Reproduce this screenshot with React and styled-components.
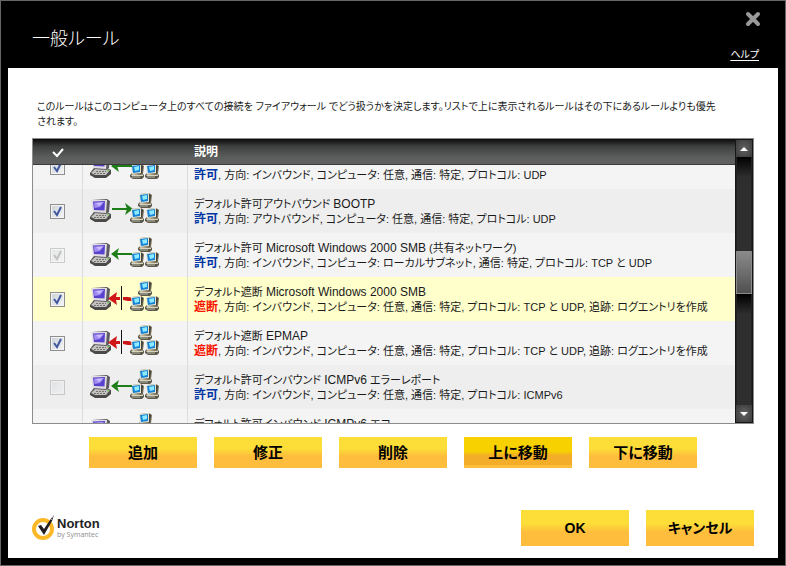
import React, { useLayoutEffect, useRef } from 'react';
import styled, { createGlobalStyle, css } from 'styled-components';

const GlobalStyle = createGlobalStyle`
  * {
    box-sizing: border-box;
  }
  body {
    margin: 0;
    background: #000;
    color: #1a1a1a;
    font-family: "Liberation Sans", "Noto Sans CJK JP", sans-serif;
    font-size: 12px;
    line-height: 15px;
    font-feature-settings: "palt";
  }
`;

const Dialog = styled.div`
  display: flex;
  flex-direction: column;
  height: 100vh;
  min-height: 400px;
  padding: 0 7px 7px;
  border: 1px solid #666;
  background: #000;
`;

const TitleBar = styled.header`
  display: flex;
  justify-content: space-between;
  height: 67px;
  padding: 7px 19px 6px 24px;
  color: #fff;
`;

const Title = styled.h1`
  margin: 0;
  padding-top: 17px;
  font-size: 18px;
  line-height: 24px;
  font-family: "Noto Sans CJK JP", sans-serif;
  font-weight: 300;
`;

const TitleActions = styled.div`
  display: flex;
  flex-direction: column;
  justify-content: space-between;
  align-items: flex-end;
`;

const CloseButton = styled.button`
  display: flex;
  padding: 3px 0 0;
  margin-right: -2px;
  border: none;
  background: none;
  cursor: pointer;
`;

const HelpLink = styled.a`
  color: #fff;
  font-size: 10px;
  line-height: 14px;
  text-underline-offset: 2px;
`;

const Content = styled.main`
  display: flex;
  flex: 1;
  flex-direction: column;
  min-height: 0;
  padding: 31px 24px 12px;
  background: #fff;
`;

const Intro = styled.p`
  margin: 0 0 9px;
  padding-left: 5px;
  font-size: 10px;
`;

const RuleList = styled.div`
  display: flex;
  flex: 1;
  min-height: 0;
  border: 1px solid #8c8c8c;
`;

const Viewport = styled.div`
  flex: 1;
  min-width: 0;
  overflow: hidden;
`;

const RuleTable = styled.table`
  width: 100%;
  table-layout: fixed;
  border-collapse: separate;
  border-spacing: 0;
`;

const HeadCell = styled.th`
  position: sticky;
  top: 0;
  z-index: 1;
  width: ${(props) => props.$width || 'auto'};
  height: 26px;
  padding: 2px 0 0 ${(props) => (props.$text ? '6px' : '0')};
  border-bottom: 1px solid #3c3a3c;
  background: linear-gradient(#0a0a0a, #3f4040 30%, #5d5f5f 75%, #5f6161);
  color: #fff;
  text-align: ${(props) => (props.$text ? 'left' : 'center')};
  font-weight: bold;

  svg {
    display: block;
    margin: 0 auto;
  }
`;

const Row = styled.tr`
  height: 44px;
  background: #f4f4f4;

  &:nth-child(even) {
    background: #eee;
  }

  ${(props) =>
    props.$selected &&
    css`
      &&& {
        background: #ffffcc;
      }
    `}
`;

const Cell = styled.td`
  height: 44px;
  padding: 0;
  border-right: 1px solid #dcdcdc;
  vertical-align: middle;
`;

const IconCell = styled(Cell)`
  padding-left: 7px;

  svg {
    display: block;
  }
`;

const TextCell = styled(Cell)`
  padding: 2px 0 0 6px;
  border-right: none;
  font-size: 11px;
  white-space: nowrap;
`;

const Line = styled.div`
  height: 15px;
`;

const Latin = styled.span`
  font-size: 12px;
`;

const Action = styled.b`
  color: ${(props) => (props.$block ? '#f81400' : '#0036a3')};
  font-size: 12px;
`;

const CheckLabel = styled.label`
  display: grid;
  width: 15px;
  margin: 0 auto;
  opacity: ${(props) => (props.$disabled ? 0.4 : 1)};

  > * {
    grid-area: 1 / 1;
  }

  svg {
    pointer-events: none;
  }
`;

const CheckInput = styled.input`
  appearance: none;
  width: 15px;
  height: 15px;
  margin: 0;
  border: 1px solid #8e8f8f;
  background: linear-gradient(135deg, #ccd0d6, #f4f5f6);
  box-shadow: inset 0 0 0 1px #f4f4f4;
`;

const ScrollBar = styled.div`
  display: flex;
  flex-direction: column;
  width: 18px;
  padding: 1px;
  background: #161616;
`;

const ScrollButton = styled.button`
  display: flex;
  align-items: center;
  justify-content: center;
  height: 17px;
  padding: 0;
  border: none;
  background: radial-gradient(#626262, #3a3a3a);
`;

const Track = styled.div`
  background: linear-gradient(#000, #2e2e2e 20px, #2e2e2e);
  box-shadow: inset 1px 0 #222, inset -1px 0 #222;
`;

const Thumb = styled.div`
  height: 43px;
  border: 1px solid #8a8a8a;
  background: linear-gradient(#8a8a8a, #505050);
`;

const Actions = styled.div`
  display: flex;
  justify-content: center;
  gap: 17px;
  margin: 13px 0 42px;
`;

const Footer = styled.footer`
  display: flex;
  gap: 17px;
`;

const Button = styled.button`
  width: 108px;
  height: ${(props) => (props.$large ? '36px' : '31px')};
  padding: 0;
  border: none;
  background: ${(props) =>
    props.$active
      ? 'linear-gradient(#f8d100 45%, #f3ad29 60%, #f3ad29 90%, #fdbd3c 90%)'
      : 'linear-gradient(#fddd38 38%, #febd3c 62%)'};
  color: #000;
  font: bold ${(props) => (props.$large ? '14px' : '15px')}/20px "Liberation Sans", "Noto Sans CJK JP", sans-serif;
  font-feature-settings: "palt";
  cursor: pointer;
`;

const Brand = styled.div`
  display: flex;
  align-items: center;
  gap: 3px;
  margin-right: auto;
`;

const BrandText = styled.div`
  display: flex;
  flex-direction: column;
`;

const BrandName = styled.strong`
  color: #222;
  font-size: 13px;
  line-height: 14px;
`;

const BrandOwner = styled.span`
  color: #8d8d8d;
  font-family: "Open Sans", sans-serif;
  font-size: 7px;
  line-height: 8px;
`;

const rules = [
  { checked: true, flow: 'in', name: '', app: '', detail: ['インバウンド', '任意', 'UDP'] },
  { checked: true, flow: 'out', name: 'デフォルト許可アウトバウンド', app: 'BOOTP', detail: ['アウトバウンド', '任意', 'UDP'] },
  { checked: true, disabled: true, flow: 'in', name: 'デフォルト許可', app: 'Microsoft Windows 2000 SMB', suffix: '(共有ネットワーク)', detail: ['インバウンド', 'ローカルサブネット', 'TCP と UDP'] },
  { checked: true, selected: true, block: true, name: 'デフォルト遮断', app: 'Microsoft Windows 2000 SMB', detail: ['インバウンド', '任意', 'TCP と UDP'] },
  { checked: true, block: true, name: 'デフォルト遮断', app: 'EPMAP', detail: ['インバウンド', '任意', 'TCP と UDP'] },
  { disabled: true, flow: 'in', name: 'デフォルト許可インバウンド', app: 'ICMPv6', suffix: 'エラーレポート', detail: ['インバウンド', '任意', 'ICMPv6'] },
  { checked: true, flow: 'in', name: 'デフォルト許可インバウンド', app: 'ICMPv6', suffix: 'エコー' },
];

function SmallPc({ x, y }) {
  return (
    <g transform={`translate(${x} ${y})`}>
      <path d="M0 11l2-2h10l2 2v2l-2 2H3l-3-2z" fill="#5c5a4c" />
      <path d="M1 11l2-1h9l1 1v1H2z" fill="#d8d4bd" />
      <path d="M2 1l9-1 3 2-1 8-2 1-9-1z" fill="#77705a" />
      <path d="M1 1l10-1v9l-9 1z" fill="#e9e5d2" />
      <path d="M2 2l8-1v7l-7 1z" fill="#1484d8" />
      <path d="M4 3l5-1v4L5 7z" fill="#8deaff" />
      <path d="M11 1l2 1-1 7-1 1z" fill="#45423a" />
      <path d="M2 13h8" stroke="#b9b6a6" />
    </g>
  );
}

function BigPc() {
  return (
    <g>
      <path d="M0 24l4-5h13l4 2v4l-5 4H5l-5-3z" fill="#4b4a48" />
      <path d="M1 24l4-4h11l4 1-4 5H5z" fill="#c4c2c0" />
      <path d="M4 24.500h11M6 22.500h10" stroke="#77736f" strokeDasharray="2 1" />
      <path d="M2 7l15-1 3 2-1 11-3 2-12-1z" fill="#5d5a60" />
      <path d="M1 7h16l-1 13-13-1z" fill="#e2dde0" />
      <path d="M3 8.500l12-.5-.5 9.500-10.500-.5z" fill="#5843cf" />
      <path d="M4 9.500l10-.5-4 5-5.500 1z" fill="#a48ef2" />
      <path d="M6 10l7-.5-4 3.500z" fill="#cdbdff" />
      <path d="M17 21.500h2" stroke="#62d342" />
    </g>
  );
}

function FlowIcon({ flow, block }) {
  return (
    <svg width="70" height="36" viewBox="0 0 70 36" aria-hidden="true">
      <BigPc />
      {!block && flow === 'out' && (
        <g fill="#1d7d18">
          <path d="M22 15h15v2H22z" />
          <path d="M35 10l8 6-8 6 2-6z" />
        </g>
      )}
      {block && <path d="M33 16h5l5 1v3h-5l-5-1z" fill="#c91515" />}
      <SmallPc x={48} y={0} />
      <SmallPc x={40} y={15} />
      <SmallPc x={55} y={15} />
      {!block && flow === 'in' && (
        <g fill="#1d7d18">
          <path d="M27 16h15v2H27z" />
          <path d="M29 11l-8 6 8 6-2-6z" />
        </g>
      )}
      {block && (
        <>
          <path d="M27 11l-9 6.500 9 6.500-1-5h4v-3h-4z" fill="#d01616" />
          <path d="M31 5h1v24h-1z" fill="#111" />
        </>
      )}
    </svg>
  );
}

function RuleRow({ rule }) {
  const [direction, computer, protocol] = rule.detail || [];
  return (
    <Row $selected={rule.selected}>
      <Cell>
        <CheckLabel $disabled={rule.disabled}>
          <CheckInput type="checkbox" defaultChecked={rule.checked} disabled={rule.disabled} />
          {rule.checked && (
            <svg width="15" height="15" viewBox="0 0 15 15">
              <path d="M4 7l3 4 4-8" fill="none" stroke={rule.disabled ? '#777' : '#4059a0'} strokeWidth="2" />
            </svg>
          )}
        </CheckLabel>
      </Cell>
      <IconCell>
        <FlowIcon flow={rule.flow} block={rule.block} />
      </IconCell>
      <TextCell>
        <Line>
          {rule.name} <Latin>{rule.app}</Latin> {rule.suffix}
        </Line>
        <Line>
          {rule.detail && (
            <>
              <Action $block={rule.block}>{rule.block ? '遮断' : '許可'}</Action>, 方向: {direction}, コンピュータ: {computer}, 通信: 特定, プロトコル:{' '}
              {protocol}
              {rule.block && ', 追跡: ログエントリを作成'}
            </>
          )}
        </Line>
      </TextCell>
    </Row>
  );
}

function NortonMark() {
  return (
    <svg width="22" height="28" viewBox="0 0 22 28" aria-hidden="true">
      <circle cx="11" cy="15" r="9" fill="none" stroke="#fdb827" strokeWidth="4" />
      <path d="M6 12l3-1 3 4 6-9 4-5-2 6-8 14z" fill="#231f20" />
      <path d="M18 4l2 2M20 2l1 2" stroke="#fff" strokeWidth="0.6" />
    </svg>
  );
}

function App() {
  const viewportRef = useRef(null);

  useLayoutEffect(() => {
    viewportRef.current.scrollTop = 20;
  }, []);

  return (
    <>
      <GlobalStyle />
      <Dialog>
        <TitleBar>
          <Title>一般ルール</Title>
          <TitleActions>
            <CloseButton type="button" aria-label="閉じる">
              <svg width="16" height="16" viewBox="0 0 16 16">
                <path d="M3 3l10 10M13 3L3 13" stroke="#999" strokeWidth="4" strokeLinecap="round" />
              </svg>
            </CloseButton>
            <HelpLink href="#help">ヘルプ</HelpLink>
          </TitleActions>
        </TitleBar>
        <Content>
          <Intro>
            このルールはこのコンピュータ上のすべての接続を ファイアウォール でどう扱うかを決定します。リストで上に表示されるルールはその下にあるルールよりも優先
            <br />
            されます。
          </Intro>
          <RuleList>
            <Viewport ref={viewportRef}>
              <RuleTable>
                <thead>
                  <tr>
                    <HeadCell $width="50px">
                      <svg width="14" height="12" viewBox="0 0 14 12" aria-hidden="true">
                        <path d="M2 5l4 4 6-7" fill="none" stroke="#fff" strokeWidth="2" />
                      </svg>
                    </HeadCell>
                    <HeadCell $width="105px" />
                    <HeadCell $text>説明</HeadCell>
                  </tr>
                </thead>
                <tbody>
                  {rules.map((rule, index) => (
                    <RuleRow key={index} rule={rule} />
                  ))}
                </tbody>
              </RuleTable>
            </Viewport>
            <ScrollBar>
              <ScrollButton type="button" aria-label="上へ">
                <svg width="8" height="4" viewBox="0 0 8 4">
                  <path d="M0 4l4-4 4 4z" fill="#fff" />
                </svg>
              </ScrollButton>
              <Track style={{ flexGrow: 94 }} />
              <Thumb />
              <Track style={{ flexGrow: 111 }} />
              <ScrollButton type="button" aria-label="下へ">
                <svg width="8" height="4" viewBox="0 0 8 4">
                  <path d="M0 0h8L4 4z" fill="#fff" />
                </svg>
              </ScrollButton>
            </ScrollBar>
          </RuleList>
          <Actions>
            <Button type="button">追加</Button>
            <Button type="button">修正</Button>
            <Button type="button">削除</Button>
            <Button type="button" $active>上に移動</Button>
            <Button type="button">下に移動</Button>
          </Actions>
          <Footer>
            <Brand>
              <NortonMark />
              <BrandText>
                <BrandName>Norton</BrandName>
                <BrandOwner>by Symantec</BrandOwner>
              </BrandText>
            </Brand>
            <Button type="button" $large>OK</Button>
            <Button type="button" $large>キャンセル</Button>
          </Footer>
        </Content>
      </Dialog>
    </>
  );
}

export default App;
